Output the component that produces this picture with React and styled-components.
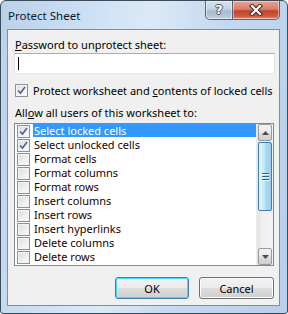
import React from "react";
import styled, { createGlobalStyle } from "styled-components";

const Global = createGlobalStyle`
  html, body { margin: 0; padding: 0; background: #fff; }
  body { font-family: "Noto Sans", "Open Sans", sans-serif; }
  * { box-sizing: border-box; }
`;

const Window = styled.div`
  width: 288px;
  height: 314px;
  border: 1px solid #3f4a57;
  border-radius: 6px 6px 3px 3px;
  background: linear-gradient(100deg, #b9d1ea 0%, #cfe2f5 30%, #dbe9f7 45%, #c4daf0 65%, #b7cfe9 100%);
  padding: 0 7px 7px 6px;
  display: flex;
  flex-direction: column;
  overflow: hidden;
  white-space: nowrap;
`;

const TitleBar = styled.div`
  height: 28px;
  display: flex;
  justify-content: space-between;
  align-items: flex-start;
`;

const Title = styled.div`
  font-size: 11.5px;
  color: #0b1a2c;
  padding: 7px 0 0 1px;
  line-height: 15px;
`;

const Caption = styled.div`
  display: flex;
`;

const CaptionButton = styled.div`
  height: 19px;
  width: ${(p) => p.$w}px;
  display: flex;
  align-items: center;
  justify-content: center;
  border: 1px solid #5a6573;
  border-top: none;
  border-radius: ${(p) => (p.$close ? "0 0 5px 0" : "0 0 0 5px")};
  ${(p) => (p.$close ? "border-left: none;" : "")}
  background: ${(p) =>
    p.$close
      ? "linear-gradient(180deg, #e8a493 0%, #d9806a 45%, #c2432a 55%, #d05a3e 85%, #e09a7f 100%)"
      : "linear-gradient(180deg, #d6e2ee 0%, #c4d3e2 45%, #a8bbcf 55%, #b4c6d8 85%, #ccd9e6 100%)"};
  box-shadow: inset 0 0 0 1px rgba(255, 255, 255, 0.45);
`;

const HelpGlyph = styled.span`
  font-family: "DejaVu Sans", sans-serif;
  font-weight: bold;
  font-size: 13px;
  line-height: 13px;
  color: #fff;
  text-shadow: -1px 0 #4b5563, 1px 0 #4b5563, 0 -1px #4b5563, 0 1px #4b5563;
  margin-top: -1px;
`;

const Client = styled.div`
  flex: 1;
  background: #f0f0f0;
  border: 1px solid #7c8ea3;
  padding: 7px 6px 0 6px;
  display: flex;
  flex-direction: column;
`;

const Label = styled.div`
  font-size: 11px;
  line-height: 15px;
  color: #000;
  margin-left: 1px;
`;

const PasswordBox = styled.div`
  margin-top: 1px;
  height: 21px;
  width: 261px;
  background: #fff;
  border: 1px solid #abadb3;
  border-left-color: #e2e3ea;
  border-right-color: #dbdfe6;
  border-bottom-color: #e3e9ef;
  position: relative;
`;

const Caret = styled.span`
  position: absolute;
  left: 3px;
  top: 3px;
  width: 1px;
  height: 13px;
  background: #000;
`;

const CheckRow = styled.div`
  display: flex;
  align-items: center;
  gap: 5px;
  margin: 9px 0 0 1px;
  height: 14px;
  font-size: 11px;
  color: #000;
`;

const Box = styled.span`
  width: 13px;
  height: 13px;
  flex: none;
  border: 1px solid #8e8f8f;
  display: flex;
  align-items: center;
  justify-content: center;
  box-shadow: inset 0 0 0 1px #f4f4f4;
  background: linear-gradient(135deg, #dcdcdc 0%, #f0f0f0 60%, #fbfbfb 100%);
`;

const CheckMark = () => (
  <svg width="9" height="9" viewBox="0 0 9 9">
    <path d="M1 4.5 L3.5 7 L8 1" fill="none" stroke="#4a5f97" strokeWidth="1.6" />
  </svg>
);

const AllowLabel = styled(Label)`
  margin-top: 8px;
`;

const ListBox = styled.div`
  margin-top: 3px;
  width: 260px;
  height: 143px;
  border: 1px solid #828790;
  background: #fff;
  display: flex;
`;

const Items = styled.div`
  flex: 1;
  display: flex;
  flex-direction: column;
`;

const Item = styled.div`
  height: 14px;
  display: flex;
  align-items: flex-start;
  font-size: 11px;
  color: #000;
`;

const ItemBox = styled(Box)`
  margin: 1px 0 0 2px;
`;

const ItemText = styled.span`
  margin-left: 3px;
  height: 13px;
  line-height: 13px;
  padding-left: 1px;
  flex: 1;
  background: ${(p) => (p.$sel ? "#3399ff" : "transparent")};
  color: ${(p) => (p.$sel ? "#fff" : "#1a0000")};
`;

const Scroll = styled.div`
  width: 17px;
  display: flex;
  flex-direction: column;
  background: linear-gradient(90deg, #e3e3e3, #f0f0f0 40%, #f3f3f3);
  border-left: 1px solid #ececec;
`;

const ArrowBtn = styled.div`
  height: 17px;
  margin: 0 1px;
  border: 1px solid #9a9a9a;
  border-radius: 2px;
  background: linear-gradient(180deg, #f2f2f2 0%, #ebebeb 45%, #dddddd 55%, #cfcfcf 100%);
  display: flex;
  align-items: center;
  justify-content: center;
`;

const Thumb = styled.div`
  margin: 1px 1px 0;
  height: 69px;
  border: 1px solid #3c7fb1;
  border-radius: 2px;
  background: linear-gradient(90deg, #e3f4fc 0%, #c4e8f9 45%, #a9d9f2 55%, #9ccff0 100%);
  display: flex;
  flex-direction: column;
  align-items: center;
  justify-content: center;
  gap: 2px;
`;

const Grip = styled.span`
  width: 7px;
  height: 1px;
  background: #2c628b;
  box-shadow: 0 1px 0 #eef8fd;
`;

const Spacer = styled.div`
  flex: 1;
`;

const Buttons = styled.div`
  display: flex;
  justify-content: flex-end;
  gap: 10px;
  margin-top: 11px;
  width: 260px;
`;

const Button = styled.div`
  width: ${(p) => p.$w}px;
  height: 22px;
  border: 1px solid ${(p) => (p.$def ? "#3c7fb1" : "#707070")};
  border-radius: 3px;
  background: linear-gradient(180deg, #f2f2f2 0%, #ebebeb 50%, #dddddd 51%, #cfcfcf 100%);
  box-shadow: inset 0 0 0 1px ${(p) => (p.$def ? "#48d8fb" : "#fcfcfc")};
  display: flex;
  align-items: center;
  justify-content: center;
  font-size: 11px;
  color: #000;
`;

const items = [
  ["Select locked cells", true, true],
  ["Select unlocked cells", true, false],
  ["Format cells", false, false],
  ["Format columns", false, false],
  ["Format rows", false, false],
  ["Insert columns", false, false],
  ["Insert rows", false, false],
  ["Insert hyperlinks", false, false],
  ["Delete columns", false, false],
  ["Delete rows", false, false],
];

export default function App() {
  return (
    <>
      <Global />
      <Window>
        <TitleBar>
          <Title>Protect Sheet</Title>
          <Caption>
            <CaptionButton $w={28}>
              <HelpGlyph>?</HelpGlyph>
            </CaptionButton>
            <CaptionButton $w={47} $close>
              <svg width="14" height="12" viewBox="0 0 14 12">
                <path d="M3 2 L11 10 M11 2 L3 10" stroke="#3b2a2a" strokeWidth="4.2" strokeLinecap="square" />
                <path d="M3 2 L11 10 M11 2 L3 10" stroke="#fff" strokeWidth="2.2" strokeLinecap="square" />
              </svg>
            </CaptionButton>
          </Caption>
        </TitleBar>
        <Client>
          <Label>
            <u>P</u>assword to unprotect sheet:
          </Label>
          <PasswordBox>
            <Caret />
          </PasswordBox>
          <CheckRow>
            <Box>
              <CheckMark />
            </Box>
            <span>
              Protect worksheet and <u>c</u>ontents of locked cells
            </span>
          </CheckRow>
          <AllowLabel>
            All<u>o</u>w all users of this worksheet to:
          </AllowLabel>
          <ListBox>
            <Items>
              {items.map(([t, c, s]) => (
                <Item key={t}>
                  <ItemBox>{c && <CheckMark />}</ItemBox>
                  <ItemText $sel={s}>{t}</ItemText>
                </Item>
              ))}
            </Items>
            <Scroll>
              <ArrowBtn>
                <svg width="7" height="4" viewBox="0 0 7 4">
                  <path d="M0 4 L3.5 0 L7 4 Z" fill="#4d4d4d" />
                </svg>
              </ArrowBtn>
              <Thumb>
                <Grip />
                <Grip />
                <Grip />
              </Thumb>
              <Spacer />
              <ArrowBtn>
                <svg width="7" height="4" viewBox="0 0 7 4">
                  <path d="M0 0 L7 0 L3.5 4 Z" fill="#4d4d4d" />
                </svg>
              </ArrowBtn>
            </Scroll>
          </ListBox>
          <Buttons>
            <Button $w={74} $def>OK</Button>
            <Button $w={75}>Cancel</Button>
          </Buttons>
        </Client>
      </Window>
    </>
  );
}
